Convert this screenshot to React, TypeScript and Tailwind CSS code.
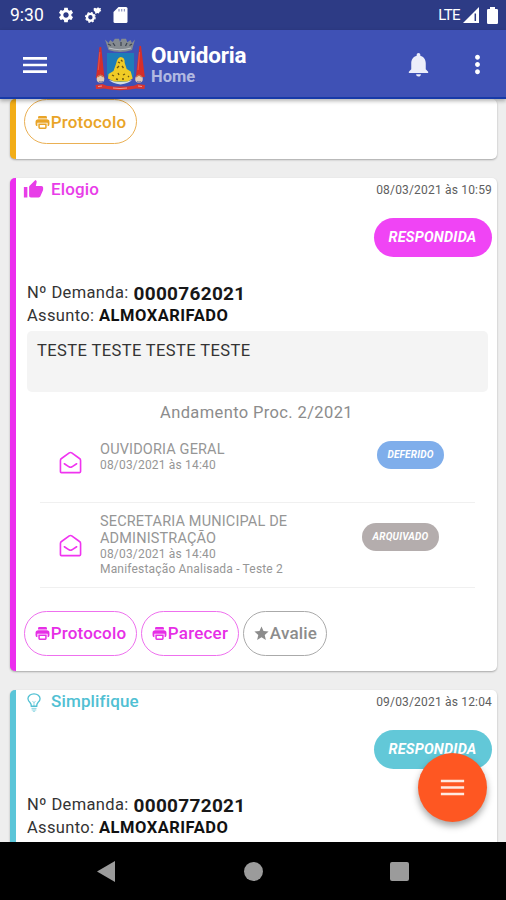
import type { ReactNode } from "react";
import {
  MdMenu,
  MdMoreVert,
  MdNotifications,
  MdSettings,
  MdThumbUp,
  MdStar,
} from "react-icons/md";

function StatusBar() {
  return (
    <div className="flex h-[30px] shrink-0 items-center bg-[#2d3b85] pl-[10px] pr-[8px] text-white">
      <span className="w-[47px] whitespace-nowrap pt-[2px] text-[17.5px] leading-none">9:30</span>
      <MdSettings className="h-[18px] w-[18px]" />
      <svg className="ml-[10px] h-[16px] w-[17px]" viewBox="0 0 17 16" fill="none">
        <circle cx="5.4" cy="10.3" r="3.4" stroke="white" strokeWidth="2.4" />
        <circle cx="5.4" cy="10.3" r="4.8" stroke="white" strokeWidth="1.2" strokeDasharray="2 1.77" />
        <path d="M8.7 1.2 10 0.8l1.4.7L13 .3l1.5 1 1.5-.2-.5 1.6.8 1.3-1.7.8-.7 1.6-1.5-.5-2 1.1-.3-2.1-1.4-1.5Z" fill="white" />
      </svg>
      <svg className="ml-[11px] h-[16px] w-[15px]" viewBox="0 0 15 16">
        <path d="M5.5 0H13a1.5 1.5 0 0 1 1.5 1.5v13A1.5 1.5 0 0 1 13 16H2a1.5 1.5 0 0 1-1.5-1.5V5Z" fill="white" />
        <path d="M6 2v2.500M8.700 2v2.500M11.400 2v2.500" stroke="#8f97c0" strokeWidth="1.200" />
      </svg>
      <span className="ml-auto text-[15px] leading-none tracking-[-0.6px]">LTE</span>
      <svg className="ml-[3px] h-[16px] w-[16px]" viewBox="0 0 16 16">
        <path d="M16 0v16H0Z" fill="white" />
        <path d="M12.3 6.5V14" stroke="#2d3b85" strokeWidth="1.5" />
      </svg>
      <svg className="ml-[8px] h-[17px] w-[11px]" viewBox="0 0 11 17">
        <path d="M3 0h5v2h1.8q1.2 0 1.2 1.2v12.6q0 1.2-1.2 1.2H1.2Q0 17 0 15.8V3.2Q0 2 1.2 2H3Z" fill="white" />
      </svg>
    </div>
  );
}

function Crest() {
  return (
    <svg className="h-[54px] w-[52px]" viewBox="0 0 52 54">
      <path d="M11 1.500 14.500 5l1.700-3 2.600 2 2-3.200H25l1 3.200 1.500-3.200H32l1.300 3.400L36.500 2l1.500 3 3-3.500-3 10.500q-12 4-23.500 0Z" fill="#858b91" />
      <path d="M14 6l3 1.500M19 5l2 3M27 4v4M33 5l-1.500 3M38 6l-2.500 1.500" stroke="#3f4653" strokeWidth="1.300" />
      <path d="M15 10q11 3.500 22 0" stroke="#bec3c8" strokeWidth="1.200" fill="none" />
      <path d="M13 15h27v22q0 5-13.500 8.500Q13 42 13 37Z" fill="#1d7db8" />
      <path d="M15 42q11.500 4 23 0-3 3-11.500 4.500Q18 45 15 42Z" fill="#d6dde0" />
      <path d="M22 26q1-6 4.500-7 4.500 0 4.200 6l2 6 4 2.500 2 7-5 3H20l-6-3 .5-4.500 5-3Z" fill="#f0cb25" />
      <path d="m24 24 2 1M27 22l1.500 1.500M23 30l2-2M28 28l1.500 2M18 37l2 1M24 35l1 2M29 37l2-1M34 39l1-1M22 41l2 .500M28 41h2" stroke="#6c5512" strokeWidth="1.300" />
      <path d="m5.500 9-3.500 31h8.500L7.200 9ZM45.500 8l-3.700 31h9L47 8Z" fill="#d52e2a" />
      <path d="m5.800 14-1.500 18M45.500 14l-1.400 18" stroke="#e86050" strokeWidth=".8" />
      <circle cx="6.500" cy="41" r="3.800" fill="#e2c9b5" />
      <circle cx="45" cy="41" r="3.800" fill="#e2c9b5" />
      <path d="M3.500 39l3-2 3 2M42 39l3-2 3 2" stroke="#c5704a" strokeWidth="1.100" fill="none" />
      <path d="M5 43.500q2 1 4 0M43 43.500q2 1 4 0" stroke="#7378a0" strokeWidth="1.100" fill="none" />
      <path d="m1.500 47 7-1 4 1.700q13.500 1.800 27.500 0l4-1.700 7 1-.5 4-8.500-.5q-16 3.500-32 0l-8 .5Z" fill="#d93531" />
      <path d="M19 50q7 1 14 0M4 48.500l4-.5M44 48l4 .500" stroke="#f3a8a0" strokeWidth=".9" fill="none" />
    </svg>
  );
}

function AppBar() {
  return (
    <header className="relative z-10 flex h-[69px] shrink-0 items-center border-b-2 border-[#173aa8] bg-[#3f51b5] text-white shadow-[0_2px_4px_rgba(0,0,0,0.3)]">
      <MdMenu className="ml-[19px] mt-[2px] h-[32px] w-[32px]" />
      <div className="ml-[43px] pt-[3px]"><Crest /></div>
      <div className="ml-[5px] pt-[3px]">
        <div className="whitespace-nowrap text-[22.500px] font-bold leading-[23px] tracking-[-0.200px]">Ouvidoria</div>
        <div className="text-[16.500px] font-bold leading-[20px] text-[#b2b9e1]">Home</div>
      </div>
      <MdNotifications className="ml-auto mt-[2px] h-[29px] w-[29px] text-[#eceefa]" />
      <MdMoreVert className="ml-[30px] mr-[14px] mt-px h-[29px] w-[29px]" />
    </header>
  );
}

function Printer() {
  return (
    <svg className="mr-px h-[13px] w-[15px]" viewBox="0 0 15 14" fill="currentColor">
      <path d="M4 0h7q1.300 0 1.300 1.300V2.700H2.700V1.300Q2.700 0 4 0Z" />
      <path fillRule="evenodd" d="M3 3.600h9Q15 3.600 15 6.500v2.300q0 2.200-2 2.200V7.300H2V11Q0 11 0 8.800V6.500Q0 3.600 3 3.600Z" />
      <path fillRule="evenodd" d="M3 8.100h9v4.400q0 1.500-1.500 1.500h-6Q3 14 3 12.500Zm1.600 1.500v2.700h5.800V9.600Z" />
    </svg>
  );
}

function OpenEnvelope() {
  return (
    <svg className="h-[23px] w-[23px] text-[#f034f0]" viewBox="0 0 24 24" fill="none" stroke="currentColor" strokeWidth="1.700" strokeLinejoin="round" strokeLinecap="round">
      <path d="M1.500 9.800Q1.500 8.500 2.600 7.800L10.700 2q1.300-.8 2.600 0l8.100 5.800q1.100.7 1.100 2v11.700q0 1-1 1h-19q-1 0-1-1Z" />
      <path d="M5.600 13.300 10.500 16.500q1.500.9 3 0l4.900-3.200" />
    </svg>
  );
}

function Bulb() {
  return (
    <svg className="ml-[3px] mt-px h-[19px] w-[14px]" viewBox="0 0 15 20" fill="none" stroke="currentColor" strokeWidth="1.400">
      <path d="M4.600 14q0-2.600-1.600-4.300A5.900 5.900 0 0 1 1 6a6.500 5.300 0 0 1 13 0q0 2-2 3.700-1.600 1.700-1.600 4.300Z" />
      <path d="M7.500 14V10M5.800 8.800l1.700 1.200 1.700-1.200M4.800 16.300h5.400M5 18h5M6.300 19.400h2.400" strokeWidth=".7" />
    </svg>
  );
}

function Pill({ color, width, icon, children }: { color: string; width: string; icon: ReactNode; children: ReactNode }) {
  return (
    <button className={`flex h-[45px] ${width} items-center justify-center rounded-full border ${color} whitespace-nowrap text-[17px] font-medium leading-none tracking-[0.2px]`}>
      {icon}
      {children}
    </button>
  );
}

type HeaderProps = { icon: ReactNode; title: string; date: string; tone: string; badge: string; number: string };

function DemandHeader({ icon, title, date, tone, badge, number }: HeaderProps) {
  return (
    <>
      <div className="flex h-[23px] items-center pl-[8px] pr-[5px]">
        <span className={`flex flex-1 items-center text-[17px] font-medium leading-none tracking-[0.150px] ${tone}`}>
          <span className="w-[27px]">{icon}</span>
          {title}
        </span>
        <span className="text-[12px] tracking-[0.180px] text-[#5e5e5e]">{date}</span>
      </div>
      <div className="mt-[17px] flex justify-end pr-[5px]">
        <span className={`flex h-[39px] w-[118px] items-center justify-center rounded-full ${badge} pr-px text-[14.500px] font-bold italic tracking-[0.200px] text-white`}>
          RESPONDIDA
        </span>
      </div>
      <div className="mt-[24px] pl-[11px] text-[16.500px] leading-[23px] text-[#333]">
        <div className="flex h-[23px] items-center whitespace-pre">
          <span className="w-[106.500px] tracking-[0.350px]">Nº Demanda:</span>
          <b className="pt-px text-[19px] font-bold tracking-[0.300px] text-[#181818]">{number}</b>
        </div>
        <div className="flex h-[22px] items-center whitespace-pre">
          <span className="w-[72px] tracking-[0.350px]">Assunto:</span>
          <b className="text-[16.500px] font-bold tracking-[0.500px] text-[#111]">ALMOXARIFADO</b>
        </div>
      </div>
    </>
  );
}

type StepProps = { lines: string[]; details: string[]; status: string; tone: string; height: string; inset: string };

function Step({ lines, details, status, tone, height, inset }: StepProps) {
  return (
    <div className={`ml-[24px] mr-[22px] flex ${height} border-b border-[#f0f0f0]`}>
      <div className="flex w-[60px] items-center pl-[19px] pt-px"><OpenEnvelope /></div>
      <div className={`flex-1 self-center text-[#969696] ${inset}`}>
        {lines.map((l) => (
          <div key={l} className="whitespace-nowrap text-[14.500px] leading-[17px] tracking-[0.150px]">{l}</div>
        ))}
        {details.map((d) => (
          <div key={d} className="whitespace-nowrap text-[12px] leading-[15.500px] tracking-[0.180px]">{d}</div>
        ))}
      </div>
      <div className="flex items-center">
        <span className={`flex h-[28px] items-center justify-center rounded-full text-[10px] font-bold italic tracking-[0.200px] text-white ${tone}`}>{status}</span>
      </div>
    </div>
  );
}

const card = "ml-[10px] w-[487px] shrink-0 border-l-[6px] bg-white rounded-[5px] shadow-[0_1px_2px_rgba(0,0,0,0.3)]";

export default function App() {
  return (
    <div className="relative flex h-[900px] w-[506px] flex-col overflow-hidden bg-[#eee] font-['Roboto','Noto_Sans',sans-serif]">
      <StatusBar />
      <AppBar />
      <main className="flex h-[743px] shrink-0 flex-col overflow-hidden">
        <section className={`${card} h-[60px] border-[#f2ad17] pl-[8px]`}>
          <Pill color="border-[#eab054] pt-px text-[#e9a427]" width="w-[113px]" icon={<Printer />}>Protocolo</Pill>
        </section>

        <section className={`${card} mt-[19px] h-[493px] border-[#ec2dee]`}>
          <DemandHeader
            icon={<MdThumbUp className="-ml-px h-[21px] w-[21px]" />}
            title="Elogio"
            date="08/03/2021 às 10:59"
            tone="text-[#e83de8]"
            badge="bg-[#f044f5]"
            number="0000762021"
          />
          <div className="ml-[11px] mt-[5px] h-[61px] w-[461px] rounded-[5px] bg-[#f4f4f4] px-[10px] pt-[10px] text-[16.500px] leading-[20px] tracking-[0.400px] text-[#333]">
            TESTE TESTE TESTE TESTE
          </div>
          <h3 className="h-[30px] pt-[11px] text-center text-[16.500px] leading-[20px] tracking-[0.370px] text-[#8c8c8c]">
            Andamento Proc. 2/2021
          </h3>
          <Step height="h-[81px]" inset="pb-[10px]" lines={["OUVIDORIA GERAL"]} details={["08/03/2021 às 14:40"]} status="DEFERIDO" tone="mr-[31px] w-[67px] mb-[15px] bg-[#7faeeb]" />
          <Step height="h-[85px]" inset="pb-0" lines={["SECRETARIA MUNICIPAL DE", "ADMINISTRAÇÃO"]} details={["08/03/2021 às 14:40", "Manifestação Analisada - Teste 2"]} status="ARQUIVADO" tone="mr-[36px] w-[77px] mb-[17px] bg-[#b4adad]" />
          <div className="mt-[23px] flex gap-[4px] pl-[8px]">
            <Pill color="border-[#ee70ee] text-[#e62ee6]" width="w-[113px]" icon={<Printer />}>Protocolo</Pill>
            <Pill color="border-[#ee70ee] text-[#e62ee6]" width="w-[98px]" icon={<Printer />}>Parecer</Pill>
            <Pill color="border-[#aaa] text-[#8c8c8c]" width="w-[84px]" icon={<MdStar className="h-[17px] w-[17px]" />}>Avalie</Pill>
          </div>
        </section>

        <section className={`${card} mt-[19px] h-[200px] border-[#5bc5d8]`}>
          <DemandHeader
            icon={<Bulb />}
            title="Simplifique"
            date="09/03/2021 às 12:04"
            tone="text-[#50c0d3]"
            badge="bg-[#62c8d8]"
            number="0000772021"
          />
        </section>
      </main>

      <nav className="flex h-[58px] shrink-0 items-center bg-black text-[#9b9b9b]">
        <svg className="ml-[97px] h-[21px] w-[18px]" viewBox="0 0 18 21" fill="currentColor"><path d="M18 0v21L0 10.500Z" /></svg>
        <span className="ml-[129px] h-[19px] w-[19px] rounded-full bg-[#9b9b9b]" />
        <span className="ml-[127px] h-[19px] w-[19px] rounded-[2px] bg-[#9b9b9b]" />
      </nav>

      <button className="absolute left-[418px] top-[753px] flex h-[69px] w-[69px] items-center justify-center rounded-full bg-[#fe5722] text-[#ffe9e0] shadow-[0_4px_7px_rgba(0,0,0,0.35)]">
        <MdMenu className="h-[31px] w-[31px]" />
      </button>
    </div>
  );
}
